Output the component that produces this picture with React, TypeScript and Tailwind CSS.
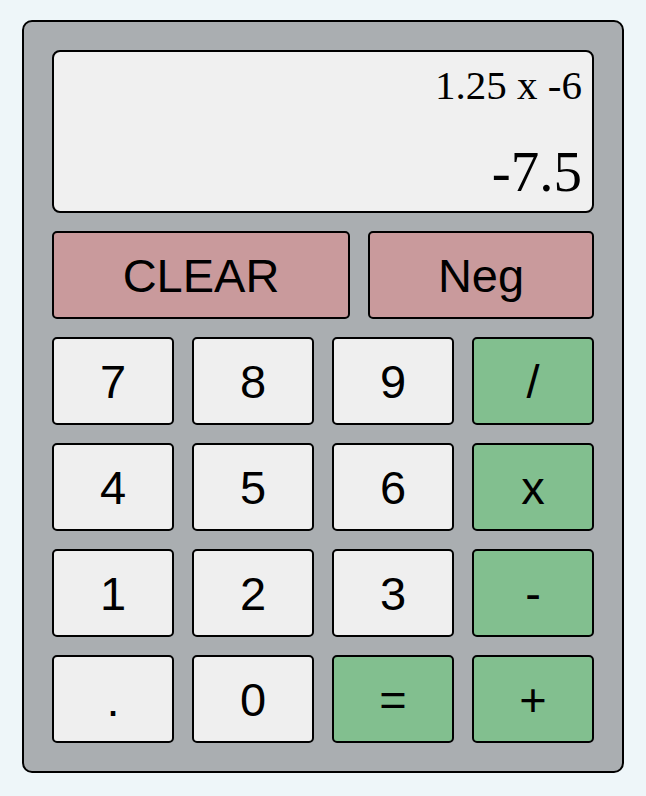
import React from "react";

type Key = {
  label: string;
  kind: "num" | "op";
};

const keys: Key[] = [
  { label: "7", kind: "num" },
  { label: "8", kind: "num" },
  { label: "9", kind: "num" },
  { label: "/", kind: "op" },
  { label: "4", kind: "num" },
  { label: "5", kind: "num" },
  { label: "6", kind: "num" },
  { label: "x", kind: "op" },
  { label: "1", kind: "num" },
  { label: "2", kind: "num" },
  { label: "3", kind: "num" },
  { label: "-", kind: "op" },
  { label: ".", kind: "num" },
  { label: "0", kind: "num" },
  { label: "=", kind: "op" },
  { label: "+", kind: "op" },
];

const App: React.FC = () => {
  return (
    <div className="min-h-screen bg-[#eef6f9] pt-[20px] pl-[22px]">
      <div className="w-[602px] rounded-[10px] border-2 border-black bg-[#aaaeb1] p-[28px]">
        <div className="h-[163px] rounded-[8px] border-2 border-black bg-[#f0f0f0] pr-[10px] pt-[13px] text-right font-['Liberation_Serif',serif] text-black">
          <div className="text-[41px] leading-none">1.25 x -6</div>
          <div className="mt-[37px] text-[57px] leading-none">-7.5</div>
        </div>

        <div className="mt-[18px] flex h-[88px] gap-[18px] font-['Liberation_Sans',Arial,sans-serif] text-[47px] text-black">
          <button className="flex w-[298px] items-center justify-center rounded-[5px] border-2 border-black bg-[#c99a9c] leading-none">
            CLEAR
          </button>
          <button className="flex flex-1 items-center justify-center rounded-[5px] border-2 border-black bg-[#c99a9c] leading-none">
            Neg
          </button>
        </div>

        <div className="mt-[18px] grid grid-cols-4 gap-[18px] font-['Liberation_Sans',Arial,sans-serif] text-[47px] text-black">
          {keys.map((k) => (
            <button
              key={k.label}
              className={
                k.kind === "op"
                  ? "flex h-[88px] items-center justify-center rounded-[5px] border-2 border-black bg-[#82bf8f] leading-none"
                  : "flex h-[88px] items-center justify-center rounded-[5px] border-2 border-black bg-[#efefef] leading-none"
              }
            >
              {k.label}
            </button>
          ))}
        </div>
      </div>
    </div>
  );
};

export default App;
